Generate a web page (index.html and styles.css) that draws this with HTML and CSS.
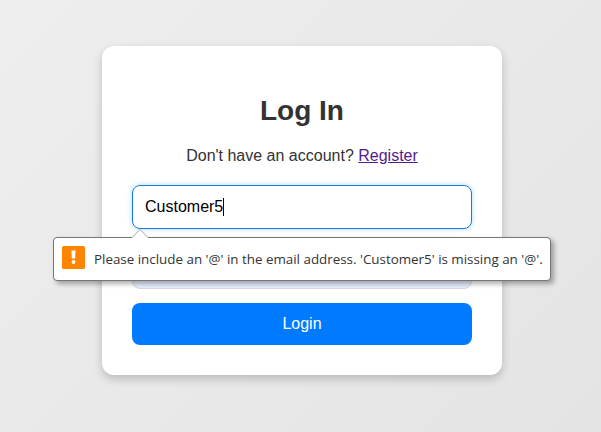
FILE: index.html
```html
<!DOCTYPE html>
<html lang="en">
<head>
<meta charset="utf-8">
<title>Log In</title>
<link rel="stylesheet" href="styles.css">
</head>
<body>
<main class="card">
  <h1>Log In</h1>
  <p>Don't have an account? <a href="#">Register</a></p>
  <div class="field focused"><span>Customer5</span><i class="caret"></i>
    <div class="bubble">
      <svg class="arrow" width="16" height="9" viewBox="0 0 16 9"><path d="M0 9V8.500L8 .5L16 8.500V9" fill="#fff"/><path d="M0 8.500L8 .5L16 8.500" fill="none" stroke="#a0a0a0"/></svg>
      <svg class="warn" width="23" height="23" viewBox="0 0 23 23"><rect width="23" height="23" rx="1.5" fill="#ff8500"/><path d="M9.500 4.500h4l-.3 8h-3.400z" fill="#fff"/><circle cx="11.500" cy="16" r="1.900" fill="#fff"/></svg>
      <span class="message">Please include an '@' in the email address. 'Customer5' is missing an '@'.</span>
    </div>
  </div>
  <div class="field filled"></div>
  <button type="button">Login</button>
</main>
</body>
</html>
```
FILE: styles.css
```css
* { box-sizing: border-box; }
body {
  margin: 0;
  height: 432px;
  overflow: hidden;
  padding: 46px 0 0 102px;
  font: 16px/18px "Liberation Sans", Arial, sans-serif;
  color: #333;
  background: linear-gradient(135deg, #eee, #e4e4e4);
}
.card {
  width: 400px;
  height: 329px;
  padding: 47px 30px 30px;
  background: #fff;
  border-radius: 12px;
  box-shadow: 0 4px 10px rgba(0, 0, 0, .2);
  text-align: center;
}
h1 { margin: 0; font-size: 28px; line-height: 36px; }
p { margin: 18px 0 20px; }
a { color: #551a8b; }
.field {
  position: relative;
  display: flex;
  align-items: center;
  height: 44px;
  padding: 0 12px;
  border: 1px solid #d3d9e6;
  border-radius: 8px;
  color: #000;
}
.focused { border-color: #1b78dc; box-shadow: 0 0 5px rgba(0, 150, 255, .35); }
.caret { width: 1px; height: 18px; background: #000; }
.filled { margin: 16px 0 14px; background: #e8f0fe; }
button {
  display: block;
  width: 100%;
  height: 42px;
  padding: 0;
  border: 0;
  border-radius: 8px;
  background: #007bff;
  color: #fff;
  font: inherit;
}
.bubble {
  position: absolute;
  z-index: 2;
  left: -80px;
  top: 51px;
  width: 498px;
  height: 44px;
  padding: 0 8px;
  display: flex;
  align-items: center;
  background: #fff;
  border: 1px solid #767676;
  border-radius: 4px;
  box-shadow: 3px 3px 5px rgba(0, 0, 0, .32);
}
.arrow { position: absolute; left: 78px; top: -9px; }
.warn { position: relative; top: -2px; flex: none; }
.message {
  margin-left: 9px;
  font: 13.38px/18px "Open Sans", "Noto Sans", sans-serif;
  color: #333;
  white-space: nowrap;
}
```
